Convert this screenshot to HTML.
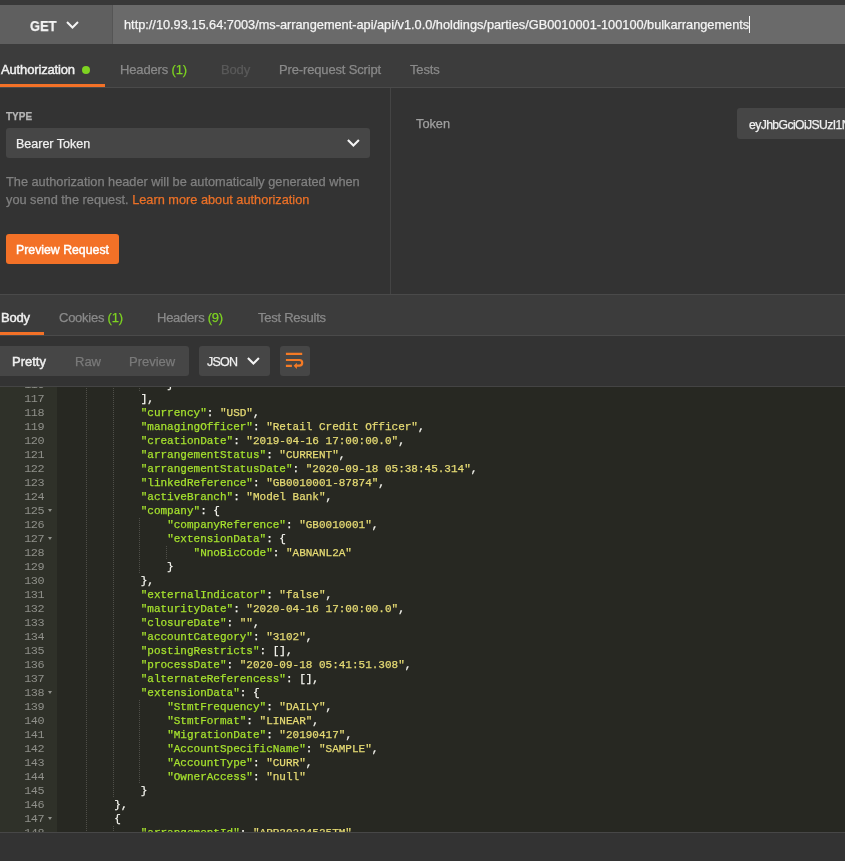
<!DOCTYPE html>
<html><head><meta charset="utf-8">
<style>
*{margin:0;padding:0;box-sizing:border-box}
html,body{-webkit-font-smoothing:antialiased;width:845px;height:861px;overflow:hidden;background:#333333;font-family:"Liberation Sans",sans-serif;}
.abs{position:absolute}
#top{left:0;top:0;width:845px;height:5px;background:#383838}
#get{left:0;top:5px;width:112px;height:39px;background:#5f5f5f}
#getsep{left:112px;top:5px;width:1px;height:39px;background:#555}
#url{left:113px;top:5px;width:732px;height:39px;background:#6a6a6a}
.t{position:absolute;white-space:nowrap;line-height:1;will-change:transform;-webkit-text-stroke:0.25px currentColor}
#tabs{left:0;top:44px;width:845px;height:43px;background:#3c3c3c}
#tabline{left:0;top:87px;width:845px;height:1px;background:#4a4a4a}
#auth{left:0;top:88px;width:845px;height:206px;background:#333}
#vdiv{left:390px;top:88px;width:1px;height:206px;background:#444}
#rline{left:0;top:294px;width:845px;height:1px;background:#4a4a4a}
#rtabs{left:0;top:295px;width:845px;height:40px;background:#3c3c3c}
#rline2{left:0;top:335px;width:845px;height:1px;background:#4a4a4a}
#tool{left:0;top:336px;width:845px;height:50px;background:#333}
#rline3{left:0;top:386px;width:845px;height:1px;background:#444}
#code{left:0;top:387px;width:845px;height:445px;background:#272822;overflow:hidden}
#gutter{left:0;top:0;width:57px;height:445px;background:#2f3129}
#bottomline{left:0;top:832px;width:845px;height:1px;background:#474747}
#bottom{left:0;top:833px;width:845px;height:28px;background:#333}
.orange{background:#f37127}
.box{background:#464646;border-radius:3px}
#lines{will-change:transform;position:absolute;left:0;top:-9px;width:845px;font-family:"Liberation Mono",monospace;font-size:11px;line-height:14px;color:#f8f8f2}
.ln{position:relative;height:14px;white-space:pre}
.num{position:absolute;left:0;width:44px;text-align:right;color:#8f908a;font-size:11.8px;letter-spacing:-0.5px;margin-top:-0.5px}
.fold{position:absolute;left:47.8px;top:5px;width:0;height:0;border-left:2.8px solid transparent;border-right:2.8px solid transparent;border-top:3.2px solid #8f908a}
.txt{position:absolute;left:61.5px;top:0;-webkit-text-stroke:0.25px currentColor}
.k{color:#a6e22e;-webkit-text-stroke:0.25px #a6e22e}
.s{color:#e6db74;-webkit-text-stroke:0.25px #e6db74}
.g{position:absolute;top:0;width:1px;height:14px;background-image:linear-gradient(#4f4f49 50%,transparent 50%);background-size:1px 2px}
</style></head><body>
<div id="top" class="abs"></div>
<div id="get" class="abs"></div>
<div id="getsep" class="abs"></div>
<div id="url" class="abs"></div>
<div class="t" style="left:30px;top:19px;font-size:14px;font-weight:bold;color:#f4f4f4;transform:scaleX(0.92);transform-origin:0 0">GET</div>
<svg class="abs" style="left:66px;top:21px" width="13" height="9" viewBox="0 0 13 9"><path d="M1 1 L6.5 6.5 L12 1" stroke="#f4f4f4" stroke-width="2" fill="none"/></svg>
<div class="t" style="left:124px;top:19px;font-size:12.75px;color:#f4f4f4">http://10.93.15.64:7003/ms-arrangement-api/api/v1.0.0/holdings/parties/GB0010001-100100/bulkarrangements</div>
<div class="abs" style="left:749px;top:16px;width:1px;height:17px;background:#f4f4f4"></div>

<div id="tabs" class="abs"></div>
<div id="tabline" class="abs"></div>
<div class="t" style="left:1px;top:63px;font-size:13px;letter-spacing:-0.15px;color:#f0f0f0;-webkit-text-stroke:0.45px #f0f0f0">Authorization</div>
<div class="abs" style="left:82px;top:66px;width:8px;height:8px;border-radius:50%;background:#7ed321"></div>
<div class="abs orange" style="left:0;top:84px;width:105px;height:3px"></div>
<div class="t" style="left:120px;top:63px;font-size:13px;letter-spacing:-0.15px;color:#8a8a8a">Headers <span style="color:#7ed321">(1)</span></div>
<div class="t" style="left:221px;top:63px;font-size:13px;letter-spacing:-0.15px;color:#5a5a5a">Body</div>
<div class="t" style="left:279px;top:63px;font-size:13px;letter-spacing:-0.15px;color:#8a8a8a">Pre-request Script</div>
<div class="t" style="left:410px;top:63px;font-size:13px;letter-spacing:-0.15px;color:#8a8a8a">Tests</div>

<div id="auth" class="abs"></div>
<div id="vdiv" class="abs"></div>
<div class="t" style="left:6px;top:112px;font-size:10px;font-weight:bold;color:#b5b5b5">TYPE</div>
<div class="abs box" style="left:6px;top:128px;width:364px;height:30px"></div>
<div class="t" style="left:16px;top:138px;font-size:12.5px;color:#f0f0f0">Bearer Token</div>
<svg class="abs" style="left:347px;top:138.5px" width="13" height="9" viewBox="0 0 13 9"><path d="M0.9 1 L6.4 6.5 L11.9 1" stroke="#f4f4f4" stroke-width="2.1" fill="none"/></svg>
<div class="t" style="left:6px;top:173px;font-size:12.75px;color:#808080;line-height:17.5px">The authorization header will be automatically generated when<br>you send the request. <span style="color:#ec7127">Learn more about authorization</span></div>
<div class="abs orange" style="left:6px;top:234px;width:113px;height:30px;border-radius:3px"></div>
<div class="t" style="left:16px;top:244px;font-size:12.3px;color:#ffffff;-webkit-text-stroke:0.45px #fff">Preview Request</div>
<div class="t" style="left:416px;top:118px;font-size:12.75px;color:#a0a0a0">Token</div>
<div class="abs box" style="left:737px;top:108px;width:120px;height:31px"></div>
<div class="t" style="left:749px;top:118.5px;font-size:12.2px;color:#f0f0f0;letter-spacing:-0.6px">eyJhbGciOiJSUzI1NiIsInR5cCI6</div>

<div id="rline" class="abs"></div>
<div id="rtabs" class="abs"></div>
<div id="rline2" class="abs"></div>
<div class="t" style="left:1px;top:311px;font-size:13px;letter-spacing:-0.25px;color:#f0f0f0;-webkit-text-stroke:0.45px #f0f0f0">Body</div>
<div class="abs orange" style="left:0;top:332px;width:44px;height:3px"></div>
<div class="t" style="left:59px;top:311px;font-size:13px;letter-spacing:-0.25px;color:#8a8a8a">Cookies <span style="color:#7ed321">(1)</span></div>
<div class="t" style="left:157px;top:311px;font-size:13px;letter-spacing:-0.25px;color:#8a8a8a">Headers <span style="color:#7ed321">(9)</span></div>
<div class="t" style="left:258px;top:311px;font-size:13px;letter-spacing:-0.25px;color:#8a8a8a">Test Results</div>

<div id="tool" class="abs"></div>
<div id="rline3" class="abs"></div>
<div class="abs box" style="left:-3px;top:346px;width:192px;height:30px"></div>
<div class="t" style="left:12px;top:355px;font-size:13px;color:#f0f0f0;-webkit-text-stroke:0.45px #f0f0f0">Pretty</div>
<div class="t" style="left:75px;top:355px;font-size:13px;color:#7a7a7a">Raw</div>
<div class="t" style="left:129px;top:355px;font-size:13px;color:#7a7a7a">Preview</div>
<div class="abs box" style="left:199px;top:346px;width:71px;height:30px"></div>
<div class="t" style="left:207px;top:355.5px;font-size:12.5px;letter-spacing:-0.8px;color:#f0f0f0">JSON</div>
<svg class="abs" style="left:247px;top:357px" width="13" height="9" viewBox="0 0 13 9"><path d="M0.9 1 L6.4 6.5 L11.9 1" stroke="#f4f4f4" stroke-width="2.1" fill="none"/></svg>
<div class="abs box" style="left:280px;top:346px;width:30px;height:30px"></div>
<svg class="abs" style="left:280px;top:346px" width="30" height="30" viewBox="0 0 30 30"><path d="M5.9 7.9 H22.2 M5.9 14 H19.4 A2.8 2.8 0 0 1 19.4 19.6 H16.2 M5.9 19.95 H11.9" stroke="#f47a25" stroke-width="2.2" fill="none"/><polygon points="13.6,19.8 16.9,16.7 16.9,22.9" fill="#f47a25"/></svg>

<div id="code" class="abs">
<div id="gutter" class="abs"></div>
<div id="lines">
<div class="ln"><span class="num">116</span><i class="g" style="left:86.0px"></i><i class="g" style="left:113.0px"></i><i class="g" style="left:139.0px"></i><span class="txt">                }</span></div>
<div class="ln"><span class="num">117</span><i class="g" style="left:86.0px"></i><i class="g" style="left:113.0px"></i><span class="txt">            ],</span></div>
<div class="ln"><span class="num">118</span><i class="g" style="left:86.0px"></i><i class="g" style="left:113.0px"></i><span class="txt">            <span class="k">&quot;currency&quot;</span>: <span class="s">&quot;USD&quot;</span>,</span></div>
<div class="ln"><span class="num">119</span><i class="g" style="left:86.0px"></i><i class="g" style="left:113.0px"></i><span class="txt">            <span class="k">&quot;managingOfficer&quot;</span>: <span class="s">&quot;Retail Credit Officer&quot;</span>,</span></div>
<div class="ln"><span class="num">120</span><i class="g" style="left:86.0px"></i><i class="g" style="left:113.0px"></i><span class="txt">            <span class="k">&quot;creationDate&quot;</span>: <span class="s">&quot;2019-04-16 17:00:00.0&quot;</span>,</span></div>
<div class="ln"><span class="num">121</span><i class="g" style="left:86.0px"></i><i class="g" style="left:113.0px"></i><span class="txt">            <span class="k">&quot;arrangementStatus&quot;</span>: <span class="s">&quot;CURRENT&quot;</span>,</span></div>
<div class="ln"><span class="num">122</span><i class="g" style="left:86.0px"></i><i class="g" style="left:113.0px"></i><span class="txt">            <span class="k">&quot;arrangementStatusDate&quot;</span>: <span class="s">&quot;2020-09-18 05:38:45.314&quot;</span>,</span></div>
<div class="ln"><span class="num">123</span><i class="g" style="left:86.0px"></i><i class="g" style="left:113.0px"></i><span class="txt">            <span class="k">&quot;linkedReference&quot;</span>: <span class="s">&quot;GB0010001-87874&quot;</span>,</span></div>
<div class="ln"><span class="num">124</span><i class="g" style="left:86.0px"></i><i class="g" style="left:113.0px"></i><span class="txt">            <span class="k">&quot;activeBranch&quot;</span>: <span class="s">&quot;Model Bank&quot;</span>,</span></div>
<div class="ln"><span class="num">125</span><i class="fold"></i><i class="g" style="left:86.0px"></i><i class="g" style="left:113.0px"></i><span class="txt">            <span class="k">&quot;company&quot;</span>: {</span></div>
<div class="ln"><span class="num">126</span><i class="g" style="left:86.0px"></i><i class="g" style="left:113.0px"></i><i class="g" style="left:139.0px"></i><span class="txt">                <span class="k">&quot;companyReference&quot;</span>: <span class="s">&quot;GB0010001&quot;</span>,</span></div>
<div class="ln"><span class="num">127</span><i class="fold"></i><i class="g" style="left:86.0px"></i><i class="g" style="left:113.0px"></i><i class="g" style="left:139.0px"></i><span class="txt">                <span class="k">&quot;extensionData&quot;</span>: {</span></div>
<div class="ln"><span class="num">128</span><i class="g" style="left:86.0px"></i><i class="g" style="left:113.0px"></i><i class="g" style="left:139.0px"></i><i class="g" style="left:166.0px"></i><span class="txt">                    <span class="k">&quot;NnoBicCode&quot;</span>: <span class="s">&quot;ABNANL2A&quot;</span></span></div>
<div class="ln"><span class="num">129</span><i class="g" style="left:86.0px"></i><i class="g" style="left:113.0px"></i><i class="g" style="left:139.0px"></i><span class="txt">                }</span></div>
<div class="ln"><span class="num">130</span><i class="g" style="left:86.0px"></i><i class="g" style="left:113.0px"></i><span class="txt">            },</span></div>
<div class="ln"><span class="num">131</span><i class="g" style="left:86.0px"></i><i class="g" style="left:113.0px"></i><span class="txt">            <span class="k">&quot;externalIndicator&quot;</span>: <span class="s">&quot;false&quot;</span>,</span></div>
<div class="ln"><span class="num">132</span><i class="g" style="left:86.0px"></i><i class="g" style="left:113.0px"></i><span class="txt">            <span class="k">&quot;maturityDate&quot;</span>: <span class="s">&quot;2020-04-16 17:00:00.0&quot;</span>,</span></div>
<div class="ln"><span class="num">133</span><i class="g" style="left:86.0px"></i><i class="g" style="left:113.0px"></i><span class="txt">            <span class="k">&quot;closureDate&quot;</span>: <span class="s">&quot;&quot;</span>,</span></div>
<div class="ln"><span class="num">134</span><i class="g" style="left:86.0px"></i><i class="g" style="left:113.0px"></i><span class="txt">            <span class="k">&quot;accountCategory&quot;</span>: <span class="s">&quot;3102&quot;</span>,</span></div>
<div class="ln"><span class="num">135</span><i class="g" style="left:86.0px"></i><i class="g" style="left:113.0px"></i><span class="txt">            <span class="k">&quot;postingRestricts&quot;</span>: [],</span></div>
<div class="ln"><span class="num">136</span><i class="g" style="left:86.0px"></i><i class="g" style="left:113.0px"></i><span class="txt">            <span class="k">&quot;processDate&quot;</span>: <span class="s">&quot;2020-09-18 05:41:51.308&quot;</span>,</span></div>
<div class="ln"><span class="num">137</span><i class="g" style="left:86.0px"></i><i class="g" style="left:113.0px"></i><span class="txt">            <span class="k">&quot;alternateReferencess&quot;</span>: [],</span></div>
<div class="ln"><span class="num">138</span><i class="fold"></i><i class="g" style="left:86.0px"></i><i class="g" style="left:113.0px"></i><span class="txt">            <span class="k">&quot;extensionData&quot;</span>: {</span></div>
<div class="ln"><span class="num">139</span><i class="g" style="left:86.0px"></i><i class="g" style="left:113.0px"></i><i class="g" style="left:139.0px"></i><span class="txt">                <span class="k">&quot;StmtFrequency&quot;</span>: <span class="s">&quot;DAILY&quot;</span>,</span></div>
<div class="ln"><span class="num">140</span><i class="g" style="left:86.0px"></i><i class="g" style="left:113.0px"></i><i class="g" style="left:139.0px"></i><span class="txt">                <span class="k">&quot;StmtFormat&quot;</span>: <span class="s">&quot;LINEAR&quot;</span>,</span></div>
<div class="ln"><span class="num">141</span><i class="g" style="left:86.0px"></i><i class="g" style="left:113.0px"></i><i class="g" style="left:139.0px"></i><span class="txt">                <span class="k">&quot;MigrationDate&quot;</span>: <span class="s">&quot;20190417&quot;</span>,</span></div>
<div class="ln"><span class="num">142</span><i class="g" style="left:86.0px"></i><i class="g" style="left:113.0px"></i><i class="g" style="left:139.0px"></i><span class="txt">                <span class="k">&quot;AccountSpecificName&quot;</span>: <span class="s">&quot;SAMPLE&quot;</span>,</span></div>
<div class="ln"><span class="num">143</span><i class="g" style="left:86.0px"></i><i class="g" style="left:113.0px"></i><i class="g" style="left:139.0px"></i><span class="txt">                <span class="k">&quot;AccountType&quot;</span>: <span class="s">&quot;CURR&quot;</span>,</span></div>
<div class="ln"><span class="num">144</span><i class="g" style="left:86.0px"></i><i class="g" style="left:113.0px"></i><i class="g" style="left:139.0px"></i><span class="txt">                <span class="k">&quot;OwnerAccess&quot;</span>: <span class="s">&quot;null&quot;</span></span></div>
<div class="ln"><span class="num">145</span><i class="g" style="left:86.0px"></i><i class="g" style="left:113.0px"></i><span class="txt">            }</span></div>
<div class="ln"><span class="num">146</span><i class="g" style="left:86.0px"></i><span class="txt">        },</span></div>
<div class="ln"><span class="num">147</span><i class="fold"></i><i class="g" style="left:86.0px"></i><span class="txt">        {</span></div>
<div class="ln"><span class="num">148</span><i class="g" style="left:86.0px"></i><i class="g" style="left:113.0px"></i><span class="txt">            <span class="k">&quot;arrangementId&quot;</span>: <span class="s">&quot;ARR20224525TM&quot;</span>,</span></div>
</div>
</div>
</div>
</div>
</div>
<div id="bottomline" class="abs"></div>
<div id="bottom" class="abs"></div>
</body></html>
